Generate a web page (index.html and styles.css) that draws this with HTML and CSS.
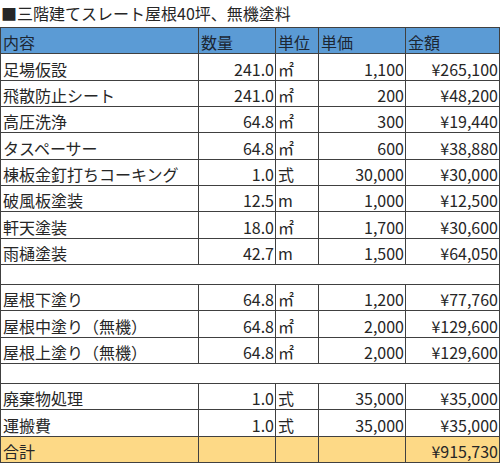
FILE: index.html
```html
<!doctype html>
<html lang="ja">
  <head>
    <meta charset="UTF-8" />
    <meta name="viewport" content="width=device-width, initial-scale=1.0" />
    <title>見積書</title>
    <link rel="stylesheet" href="styles.css">
  </head>
  <body>
    <div class="sheet-title">■三階建てスレート屋根40坪、無機塗料</div>
    <table class="estimate">
      <colgroup>
        <col class="col-item" />
        <col class="col-qty" />
        <col class="col-unit" />
        <col class="col-price" />
        <col class="col-amount" />
      </colgroup>
      <thead>
        <tr class="head-row">
          <th>内容</th>
          <th>数量</th>
          <th>単位</th>
          <th>単価</th>
          <th>金額</th>
        </tr>
      </thead>
      <tbody>
        <tr><td>足場仮設</td><td class="num">241.0</td><td>㎡</td><td class="num">1,100</td><td class="num">¥265,100</td></tr>
        <tr><td>飛散防止シート</td><td class="num">241.0</td><td>㎡</td><td class="num">200</td><td class="num">¥48,200</td></tr>
        <tr><td>高圧洗浄</td><td class="num">64.8</td><td>㎡</td><td class="num">300</td><td class="num">¥19,440</td></tr>
        <tr><td>タスペーサー</td><td class="num">64.8</td><td>㎡</td><td class="num">600</td><td class="num">¥38,880</td></tr>
        <tr><td>棟板金釘打ちコーキング</td><td class="num">1.0</td><td>式</td><td class="num">30,000</td><td class="num">¥30,000</td></tr>
        <tr><td>破風板塗装</td><td class="num">12.5</td><td>m</td><td class="num">1,000</td><td class="num">¥12,500</td></tr>
        <tr><td>軒天塗装</td><td class="num">18.0</td><td>㎡</td><td class="num">1,700</td><td class="num">¥30,600</td></tr>
        <tr><td>雨樋塗装</td><td class="num">42.7</td><td>m</td><td class="num">1,500</td><td class="num">¥64,050</td></tr>
        <tr class="spacer"><td colspan="5"></td></tr>
        <tr><td>屋根下塗り</td><td class="num">64.8</td><td>㎡</td><td class="num">1,200</td><td class="num">¥77,760</td></tr>
        <tr><td>屋根中塗り（無機）</td><td class="num">64.8</td><td>㎡</td><td class="num">2,000</td><td class="num">¥129,600</td></tr>
        <tr><td>屋根上塗り（無機）</td><td class="num">64.8</td><td>㎡</td><td class="num">2,000</td><td class="num">¥129,600</td></tr>
        <tr class="spacer"><td colspan="5"></td></tr>
        <tr><td>廃棄物処理</td><td class="num">1.0</td><td>式</td><td class="num">35,000</td><td class="num">¥35,000</td></tr>
        <tr><td>運搬費</td><td class="num">1.0</td><td>式</td><td class="num">35,000</td><td class="num">¥35,000</td></tr>
      </tbody>
      <tfoot>
        <tr class="total-row">
          <td>合計</td><td></td><td></td><td></td><td class="num">¥915,730</td>
        </tr>
      </tfoot>
    </table>
  </body>
</html>
```

FILE: styles.css
```css
body {
  margin: 0;
  background-color: #fff;
  color: #262626;
  font-family: "Noto Sans CJK JP", "Noto Sans", sans-serif;
  font-size: 16px;
}

.sheet-title {
  height: 27px;
  line-height: 27px;
  padding-left: 1px;
  box-sizing: border-box;
  white-space: nowrap;
}

.estimate {
  width: 499px;
  border-collapse: collapse;
  table-layout: fixed;
}

.col-item {
  width: 198px;
}

.col-qty {
  width: 77px;
}

.col-unit {
  width: 43px;
}

.col-price {
  width: 87px;
}

.col-amount {
  width: 94px;
}

.estimate tr {
  height: 26.33px;
}

.estimate th,
.estimate td {
  border: 1px solid #404040;
  padding: 0 2px 1px 2px;
  line-height: 20px;
  vertical-align: bottom;
  text-align: left;
  font-weight: normal;
  white-space: nowrap;
  overflow: hidden;
}

.head-row th {
  background-color: #5b9bd5;
  color: #1c2633;
}

.estimate td.num {
  text-align: right;
  padding-right: 1px;
}

.estimate .spacer {
  height: 20px;
}

.total-row td {
  background-color: #fdd986;
}
```
